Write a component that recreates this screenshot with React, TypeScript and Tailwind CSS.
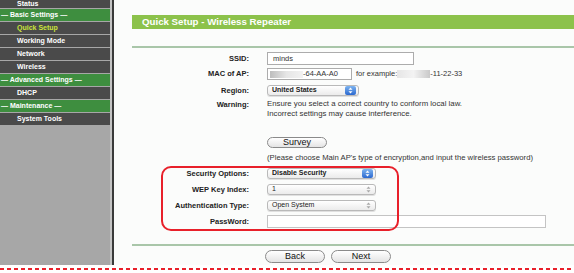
import React from "react";

const font = "font-['Liberation_Sans',Arial,sans-serif]";

type NavItem = { label: string; kind: "head" | "item" | "active" };

const nav: NavItem[] = [
  { label: "— Basic Settings —", kind: "head" },
  { label: "Quick Setup", kind: "active" },
  { label: "Working Mode", kind: "item" },
  { label: "Network", kind: "item" },
  { label: "Wireless", kind: "item" },
  { label: "— Advanced Settings —", kind: "head" },
  { label: "DHCP", kind: "item" },
  { label: "— Maintenance —", kind: "head" },
  { label: "System Tools", kind: "item" },
];

function Sidebar() {
  return (
    <div className="w-[110px] h-full bg-[#a7a7a7] flex flex-col gap-px">
      {/* Status row, only its lower part shows at the top of the window */}
      <div className="h-[8px] leading-[7px] pl-[17px] bg-[#4a4a4a] text-[7px] font-bold text-white">
        Status
      </div>
      {nav.map((n) => (
        <div
          key={n.label}
          className={`h-[12px] leading-[12px] text-[7px] font-bold whitespace-nowrap ${
            n.kind === "head"
              ? "bg-[#3e8e3f] text-white pl-[1px]"
              : n.kind === "active"
              ? "bg-[#4a4a4a] text-[#c9e43a] pl-[17px]"
              : "bg-[#4a4a4a] text-white pl-[17px]"
          }`}
        >
          {n.label}
        </div>
      ))}
    </div>
  );
}

function Label({ children }: { children: React.ReactNode }) {
  return (
    <div className="w-[117px] shrink-0 text-right text-[7.5px] font-bold text-[#222] mr-[18px]">
      {children}
    </div>
  );
}

function Stepper({ active }: { active: boolean }) {
  if (active) {
    return (
      <div className="ml-auto mr-[2px] w-[11px] h-[9px] rounded-[2px] bg-gradient-to-b from-[#7db3ef] to-[#2b68cf] flex items-center justify-center">
        <svg width="5" height="7" viewBox="0 0 5 7">
          <path d="M2.5 0.5 L4.5 2.8 H0.5 Z" fill="#fff" />
          <path d="M2.5 6.5 L4.5 4.2 H0.5 Z" fill="#fff" />
        </svg>
      </div>
    );
  }
  return (
    <div className="ml-auto mr-[4px] w-[5px] h-[9px] flex items-center justify-center">
      <svg width="5" height="7" viewBox="0 0 5 7">
        <path d="M2.5 0.5 L4.5 2.8 H0.5 Z" fill="#a8a8a8" />
        <path d="M2.5 6.5 L4.5 4.2 H0.5 Z" fill="#a8a8a8" />
      </svg>
    </div>
  );
}

function Select({ text, w, active }: { text: string; w: string; active: boolean }) {
  return (
    <div
      className={`${w} h-[11px] rounded-[3px] border border-[#b9b9b9] bg-gradient-to-b from-white to-[#ebebeb] flex items-center pl-[4px] text-[7px] text-[#222] shadow-[0_1px_0_#e0e0e0]`}
    >
      <span className={active ? "font-semibold" : ""}>{text}</span>
      <Stepper active={active} />
    </div>
  );
}

function Pill({ text, w, h }: { text: string; w: string; h: string }) {
  return (
    <div
      className={`${w} ${h} rounded-full border border-[#8a8a8a] bg-gradient-to-b from-white to-[#e4e4e4] flex items-center justify-center text-[9px] text-[#111]`}
    >
      {text}
    </div>
  );
}

export default function App() {
  return (
    <div className={`w-[574px] h-[273px] overflow-hidden bg-white ${font}`}>
      <div className="h-[265px] flex">
        <Sidebar />
        <div className="w-[2px] bg-[#c4c4c4]" />
        <div className="w-[2px] bg-[#3a3a3a]" />

        {/* content */}
        <div className="relative flex-1 bg-[#fbfcfb] pt-[15px] pl-[18px]">
          <div className="h-[14px] bg-[#8cc24b] pl-[10px] leading-[14px] text-[9.7px] font-bold text-white">
            Quick Setup - Wireless Repeater
          </div>
          <div className="mt-[17px] h-[2px] bg-[#a9c6a9]" />

          {/* SSID */}
          <div className="mt-[4px] flex items-center h-[13px]">
            <Label>SSID:</Label>
            <div className="w-[147px] h-[13px] border border-[#acacac] bg-white pl-[5px] text-[7.5px] leading-[11px] text-[#333]">
              minds
            </div>
          </div>

          {/* MAC */}
          <div className="mt-[3px] flex items-center h-[12px]">
            <Label>MAC of AP:</Label>
            <div className="w-[85px] h-[12px] border border-[#acacac] bg-white flex items-center pl-[2px] text-[7.5px] text-[#333]">
              <div className="w-[33px] h-[7px] bg-gradient-to-r from-[#bdbdbd] via-[#e6e6e6] to-[#f2f2f2] blur-[0.5px]" />
              <span>-64-AA-A0</span>
            </div>
            <div className="ml-[4px] flex items-center text-[7.5px] text-[#333]">
              <span>for example:</span>
              <div className="w-[33px] h-[8px] bg-gradient-to-r from-[#e6e6e6] via-[#f3f3f3] to-[#c9c9c9] blur-[0.5px]" />
              <span>-11-22-33</span>
            </div>
          </div>

          {/* Region */}
          <div className="mt-[5px] flex items-center h-[11px]">
            <Label>Region:</Label>
            <Select text="United States" w="w-[92px]" active />
          </div>

          {/* Warning */}
          <div className="mt-[3px] flex items-start">
            <Label>
              <span className="leading-[10px]">Warning:</span>
            </Label>
            <div className="text-[7.8px] leading-[10px] text-[#333]">
              <div>Ensure you select a correct country to conform local law.</div>
              <div>Incorrect settings may cause interference.</div>
            </div>
          </div>

          {/* Survey */}
          <div className="mt-[18px] flex items-center h-[11px]">
            <div className="w-[135px] shrink-0" />
            <Pill text="Survey" w="w-[60px]" h="h-[11px]" />
          </div>
          <div className="mt-[5px] flex items-center h-[10px]">
            <div className="w-[135px] shrink-0" />
            <div className="text-[7.7px] text-[#333] whitespace-nowrap">
              (Please choose Main AP&apos;s type of encryption,and input the wireless password)
            </div>
          </div>

          {/* security block */}
          <div className="mt-[5px] flex items-center h-[11px]">
            <Label>Security Options:</Label>
            <Select text="Disable Security" w="w-[109px]" active />
          </div>
          <div className="mt-[5px] flex items-center h-[11px]">
            <Label>WEP Key Index:</Label>
            <Select text="1" w="w-[109px]" active={false} />
          </div>
          <div className="mt-[5px] flex items-center h-[11px]">
            <Label>Authentication Type:</Label>
            <Select text="Open System" w="w-[109px]" active={false} />
          </div>
          <div className="mt-[4px] flex items-center h-[13px]">
            <Label>PassWord:</Label>
            <div className="w-[279px] h-[13px] border border-[#c4c4c4] bg-white" />
          </div>

          <div className="mt-[16px] h-[2px] bg-[#a9c6a9]" />

          {/* Back / Next */}
          <div className="mt-[4px] flex items-center h-[13px] gap-[6px]">
            <div className="w-[127px] shrink-0" />
            <Pill text="Back" w="w-[60px]" h="h-[13px]" />
            <Pill text="Next" w="w-[60px]" h="h-[13px]" />
          </div>

          {/* red annotation around security settings */}
          <div className="absolute left-[47px] top-[166px] w-[238px] h-[65px] rounded-[10px] border-2 border-[#e8202a]" />
        </div>
      </div>

      <div className="mt-[3px] h-[2px] bg-[repeating-linear-gradient(90deg,#e8202a_0px,#e8202a_4px,transparent_4px,transparent_7px)]" />
    </div>
  );
}
